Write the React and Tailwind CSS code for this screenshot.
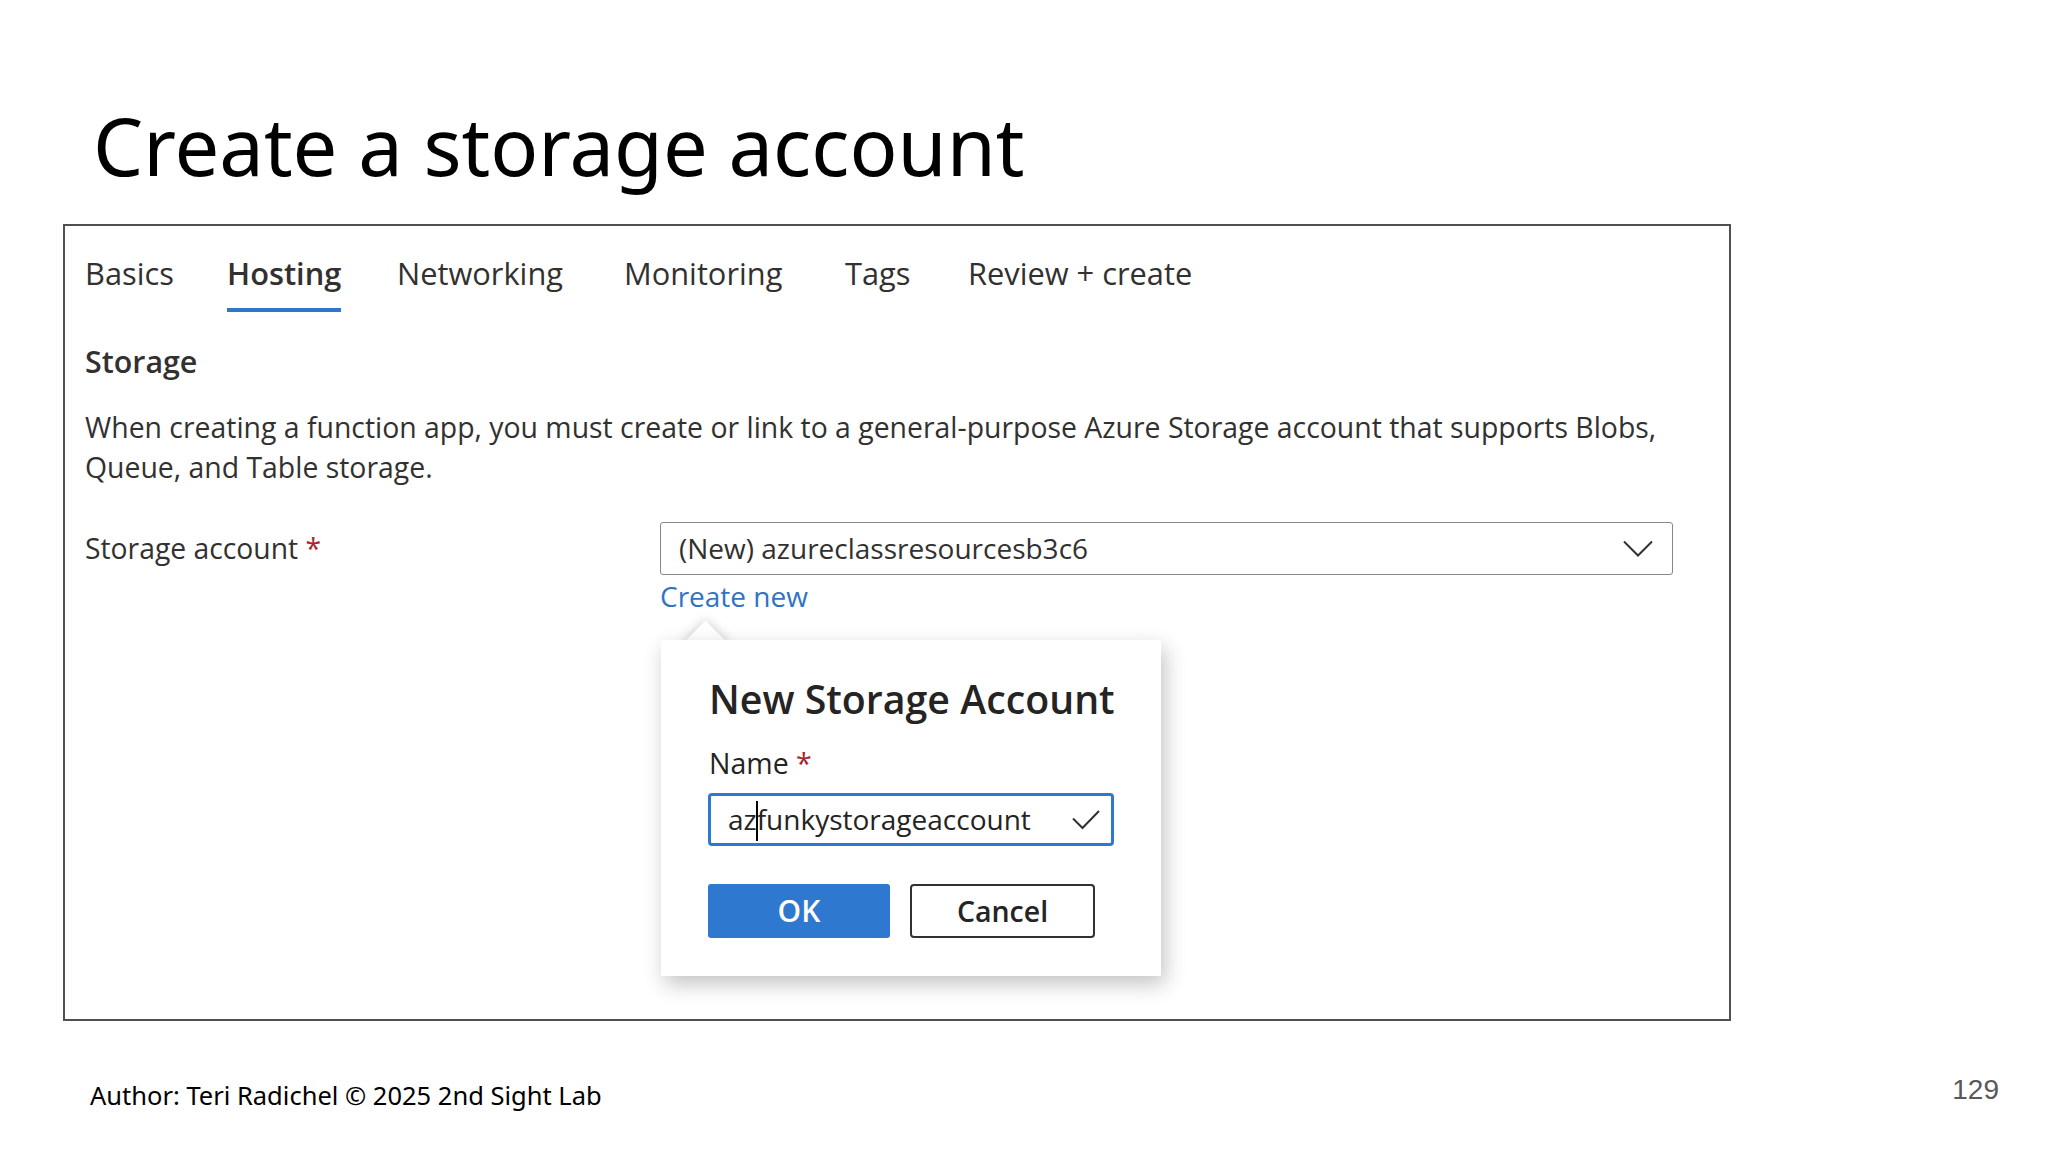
import React from "react";

const tabs = [
  { label: "Basics", w: "w-[142px]" },
  { label: "Hosting", w: "w-[170px]", active: true },
  { label: "Networking", w: "w-[227px]" },
  { label: "Monitoring", w: "w-[221px]" },
  { label: "Tags", w: "w-[123px]" },
  { label: "Review + create", w: "w-auto" },
];

function Chevron() {
  return (
    <svg width="30" height="18" viewBox="0 0 30 18" fill="none">
      <polyline points="1,1.5 15,15.5 29,1.5" stroke="#323130" strokeWidth="2" />
    </svg>
  );
}

function Check() {
  return (
    <svg width="28" height="20" viewBox="0 0 28 20" fill="none">
      <polyline points="1,8.5 10.5,18 27,1" stroke="#323130" strokeWidth="2" />
    </svg>
  );
}

function NewStoragePopup() {
  return (
    <div className="absolute left-px top-[64px] w-[500px]">
      {/* beak */}
      <div className="absolute left-[29px] top-[-13px] w-[31px] h-[31px] rotate-45 bg-white shadow-[0_0_12px_rgba(0,0,0,0.22)]" />
      <div className="relative h-[336px] bg-white pl-[47px] pt-[35px] shadow-[4px_8px_20px_rgba(0,0,0,0.24)] text-[#252423]">
        <div className="text-[39.3px] leading-[48px] font-semibold pl-px">New Storage Account</div>
        <div className="mt-[20px] text-[28.5px] leading-[40px] pl-px">
          Name <span className="text-[#a4262c]">*</span>
        </div>
        <div className="mt-[10px] w-[406px] h-[53px] border-[3px] border-[#2f78cf] rounded-[4px] flex items-center justify-between pl-[17px] pr-[11px]">
          <span className="text-[28px] leading-[47px]">
            az
            <span className="relative inline-block w-0">
              <span className="absolute left-[-1px] top-[-29px] w-[2px] h-[40px] bg-black" />
            </span>
            funkystorageaccount
          </span>
          <Check />
        </div>
        <div className="mt-[38px] flex gap-[20px]">
          <button className="w-[182px] h-[54px] bg-[#2f78cf] rounded-[3px] text-white font-semibold text-[30px] leading-[54px]">
            OK
          </button>
          <button className="w-[185px] h-[54px] border-2 border-[#323130] rounded-[4px] font-semibold text-[28.5px] text-[#252423]">
            Cancel
          </button>
        </div>
      </div>
    </div>
  );
}

export default function App() {
  return (
    <div className="w-[2048px] h-[1152px] bg-white flex flex-col font-['Noto_Sans',sans-serif] text-black">
      <h1 className="pl-[93px] pt-[105px] text-[79.5px] leading-[80px] font-normal">Create a storage account</h1>

      <div className="ml-[63px] mt-[39px] w-[1668px] h-[797px] shrink-0 border-2 border-[#505050] pl-[20px] pr-[56px] pt-[27px] font-['Open_Sans',sans-serif] text-[#323130]">
        <div className="flex">
          {tabs.map((t) => (
            <div key={t.label} className={`${t.w} shrink-0`}>
              <div className="inline-flex flex-col">
                <span className={`text-[30.8px] leading-[40px] ${t.active ? "font-semibold" : ""}`}>{t.label}</span>
                <span className={`mt-[15px] h-[4px] ${t.active ? "bg-[#2f78c8]" : "bg-transparent"}`} />
              </div>
            </div>
          ))}
        </div>

        <div className="mt-[30px] text-[30.4px] leading-[40px] font-semibold">Storage</div>
        <p className="mt-[25px] text-[28.4px] leading-[40px]">
          When creating a function app, you must create or link to a general-purpose Azure Storage account that supports Blobs,
          <br />
          Queue, and Table storage.
        </p>

        <div className="mt-[35px] flex">
          <div className="w-[575px] shrink-0 text-[28.3px] leading-[53px]">
            Storage account <span className="text-[#a4262c]">*</span>
          </div>
          <div className="flex-1">
            <div className="h-[53px] border border-[#8a8886] rounded-[3px] flex items-center justify-between pl-[18px] pr-[19px]">
              <span className="text-[28px] leading-[51px]">(New) azureclassresourcesb3c6</span>
              <Chevron />
            </div>
            <div className="relative mt-px">
              <span className="text-[28px] leading-[40px] text-[#2f73c4]">Create new</span>
              <NewStoragePopup />
            </div>
          </div>
        </div>
      </div>

      <div className="mt-[56px] flex items-start justify-between pl-[90px] pr-[49px]">
        <span className="text-[25.5px] leading-[36px]">Author: Teri Radichel © 2025 2nd Sight Lab</span>
        <span className="font-['Liberation_Sans',sans-serif] text-[28px] leading-[26px] text-[#595959]">129</span>
      </div>
    </div>
  );
}
